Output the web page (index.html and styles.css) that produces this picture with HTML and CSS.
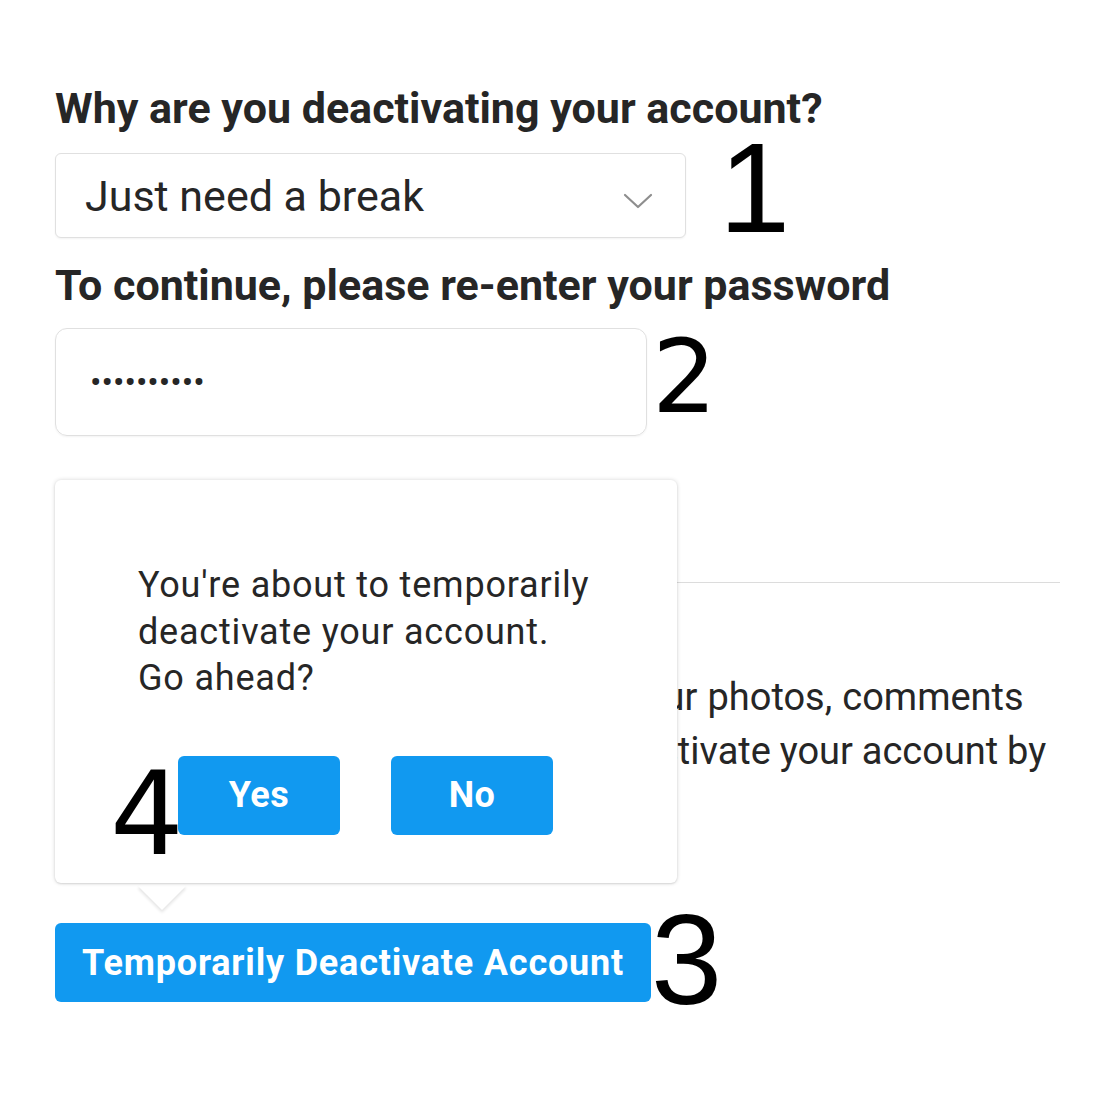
FILE: index.html
```html
<!DOCTYPE html>
<html lang="en">
<head>
<meta charset="utf-8">
<title>Deactivate account</title>
<link rel="stylesheet" href="styles.css">
</head>
<body>
<main class="page">
  <h2 class="label label-first">Why are you deactivating your account?</h2>
  <div class="row row-select">
    <div class="select">
      <span class="select-value">Just need a break</span>
      <svg class="chevron" width="30" height="18" viewBox="0 0 30 18"><path d="M2 3 L15 15 L28 3" fill="none" stroke="#8e8e8e" stroke-width="2.2" stroke-linecap="round" stroke-linejoin="round"/></svg>
    </div>
    <span class="mark mark-1">1</span>
  </div>

  <h2 class="label label-second">To continue, please re-enter your password</h2>
  <div class="row row-pass">
    <div class="password"><span class="dots">••••••••••</span></div>
    <span class="mark mark-2">2</span>
  </div>

  <section class="confirm-area">
    <hr class="divider">
    <p class="info">
      <span class="info-line info-line-a">Your profile will be hidden, as will your photos, comments</span>
      <span class="info-line info-line-b">and likes will remain so until you reactivate your account by</span>
      <span class="info-line">logging back in.</span>
    </p>

    <div class="row row-submit">
      <button class="btn btn-main">Temporarily Deactivate Account</button>
      <span class="mark mark-3">3</span>
    </div>

    <div class="popup">
      <p class="popup-text">You're about to temporarily<br>deactivate your account.<br>Go ahead?</p>
      <div class="popup-actions">
        <button class="btn btn-small">Yes</button>
        <button class="btn btn-small">No</button>
      </div>
      <span class="mark mark-4">4</span>
      <span class="popup-arrow"></span>
    </div>
  </section>
</main>
</body>
</html>
```

FILE: styles.css
```css
* { box-sizing: border-box; }

html {
  background: #ffffff;
}

html, body {
  margin: 0;
  padding: 0;
}

body {
  font-family: Roboto, "Liberation Sans", Arial, sans-serif;
  color: #262626;
}

.page {
  padding: 82px 0 0 55px;
  width: 1100px;
  height: 1105px;
  overflow: hidden;
}

.label {
  margin: 0;
  font-size: 43px;
  font-weight: 700;
  line-height: 52px;
  color: #262626;
}

.label-second {
  margin-top: 21px;
}

.row {
  display: flex;
  align-items: center;
}

.row-select {
  margin-top: 19px;
  height: 85px;
}

.select {
  width: 631px;
  height: 85px;
  border: 1.5px solid #e0e0e0;
  border-radius: 6px;
  display: flex;
  align-items: center;
  justify-content: space-between;
  padding: 0 32px 0 29px;
  background: #fff;
  box-shadow: 0 1px 2px rgba(0, 0, 0, 0.05);
}

.select-value {
  font-size: 43px;
  font-weight: 400;
  color: #262626;
}

.chevron {
  margin-top: 10px;
}

.mark {
  font-family: "Liberation Sans", Arial, sans-serif;
  color: #000;
  line-height: 1;
}

.mark-1 {
  align-self: flex-start;
  font-size: 128px;
  margin-left: 33px;
  margin-top: -29px;
}

.row-pass {
  margin-top: 17px;
  height: 108px;
}

.password {
  width: 592px;
  height: 108px;
  border: 1.5px solid #e0e0e0;
  border-radius: 12px;
  padding: 0 0 0 34px;
  display: flex;
  align-items: center;
  box-shadow: 0 1px 2px rgba(0, 0, 0, 0.05);
}

.dots {
  font-size: 34px;
  color: #262626;
}

.mark-2 {
  align-self: flex-start;
  font-family: "DejaVu Sans", sans-serif;
  font-size: 102px;
  margin-left: 5px;
  margin-top: -2px;
}

.confirm-area {
  position: relative;
  margin-top: 146px;
  width: 1005px;
}

.divider {
  margin: 0;
  border: 0;
  border-top: 1.5px solid #dcdcdc;
}

.info {
  margin: 87px 0 0 0;
  font-size: 38px;
  line-height: 54px;
  color: #262626;
}

.info-line {
  display: block;
  white-space: nowrap;
}

.info-line-a {
  word-spacing: 0.6px;
}

.info-line-b {
  word-spacing: -0.6px;
}

.row-submit {
  margin-top: 91px;
  height: 79px;
}

.btn {
  font-family: Roboto, "Liberation Sans", Arial, sans-serif;
  border: 0;
  background: #1199f0;
  color: #fff;
  font-weight: 700;
  cursor: pointer;
  padding: 0;
}

.btn-main {
  width: 596px;
  height: 79px;
  border-radius: 6px;
  font-size: 36px;
  letter-spacing: 0.8px;
}

.mark-3 {
  align-self: flex-start;
  font-size: 128px;
  margin-left: 0;
  margin-top: -27px;
}

.popup {
  position: absolute;
  left: 0;
  top: -102px;
  width: 622px;
  height: 403px;
  background: #fff;
  border-radius: 6px;
  box-shadow: 0 0 4px rgba(0, 0, 0, 0.16), 0 1px 2px rgba(0, 0, 0, 0.1);
  padding: 82px 0 0 83px;
}

.popup-text {
  margin: 0;
  font-size: 36px;
  line-height: 46.5px;
  letter-spacing: 0.8px;
  color: #262626;
}

.popup-actions {
  display: flex;
  gap: 51px;
  margin: 54px 0 0 40px;
}

.btn-small {
  width: 162px;
  height: 79px;
  border-radius: 6px;
  font-size: 36px;
  letter-spacing: 0.5px;
}

.mark-4 {
  position: absolute;
  left: 55px;
  top: 276px;
  font-family: "DejaVu Sans", sans-serif;
  font-size: 116px;
}

.popup-arrow {
  position: absolute;
  left: 90px;
  bottom: -20px;
  width: 34px;
  height: 34px;
  background: #fff;
  transform: rotate(45deg);
  box-shadow: 2px 2px 3px rgba(0, 0, 0, 0.1);
  z-index: -1;
}
```
